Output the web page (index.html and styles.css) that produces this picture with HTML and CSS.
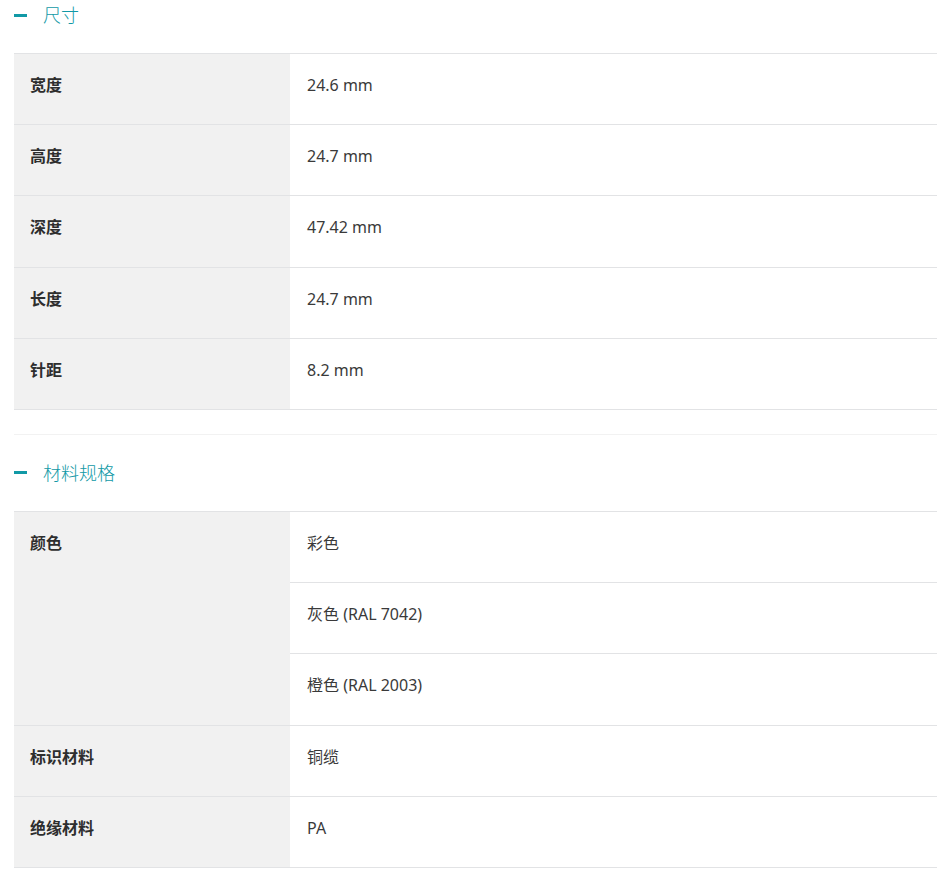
FILE: index.html
```html
<!DOCTYPE html>
<html lang="zh-CN">
<head>
<meta charset="utf-8">
<title>规格</title>
<link rel="stylesheet" href="styles.css">
</head>
<body>
<div class="page">
  <section class="section">
    <div class="section-head">
      <span class="toggle" aria-hidden="true"></span>
      <h2 class="section-title">尺寸</h2>
    </div>
    <div class="spec-table">
      <div class="row"><div class="label">宽度</div><div class="values"><div class="value">24.6 mm</div></div></div>
      <div class="row"><div class="label">高度</div><div class="values"><div class="value">24.7 mm</div></div></div>
      <div class="row"><div class="label">深度</div><div class="values"><div class="value">47.42 mm</div></div></div>
      <div class="row"><div class="label">长度</div><div class="values"><div class="value">24.7 mm</div></div></div>
      <div class="row"><div class="label">针距</div><div class="values"><div class="value">8.2 mm</div></div></div>
    </div>
  </section>
  <section class="section">
    <div class="section-head">
      <span class="toggle" aria-hidden="true"></span>
      <h2 class="section-title">材料规格</h2>
    </div>
    <div class="spec-table">
      <div class="row"><div class="label">颜色</div><div class="values"><div class="value">彩色</div><div class="value">灰色 (RAL 7042)</div><div class="value">橙色 (RAL 2003)</div></div></div>
      <div class="row"><div class="label">标识材料</div><div class="values"><div class="value">铜缆</div></div></div>
      <div class="row"><div class="label">绝缘材料</div><div class="values"><div class="value">PA</div></div></div>
    </div>
  </section>
</div>
</body>
</html>
```
FILE: styles.css
```css
html, body {
  margin: 0;
  padding: 0;
  background: #ffffff;
}

body {
  font-family: "Noto Sans", "Noto Sans CJK SC", sans-serif;
  font-size: 16px;
  color: #333333;
}

.page {
  padding: 0 11px 0 14px;
}

.section + .section {
  margin-top: 24px;
  border-top: 1px solid #f2f2f2;
}

.section-head {
  display: flex;
  align-items: center;
  gap: 16px;
  padding: 26px 0;
}

.section:first-child .section-head {
  padding-top: 3px;
}

.toggle {
  display: block;
  width: 13px;
  height: 3px;
  background: #1199a6;
}

.section-title {
  margin: 0;
  font-size: 18px;
  line-height: 24px;
  font-weight: 300;
  color: #1199a6;
}

.spec-table {
  border-top: 1px solid #e2e3e5;
}

.row {
  display: grid;
  grid-template-columns: 276px 1fr;
  border-bottom: 1px solid #e2e3e5;
}

.label {
  background: #f1f1f1;
  font-weight: 700;
  color: #2e2e2e;
  padding: 19px 16px 27.2px;
  line-height: 24px;
}

.values {
  display: flex;
  flex-direction: column;
}

.value {
  padding: 19px 17px 27.2px;
  line-height: 24px;
  color: #3a3a3a;
  font-size: 16px;
}

.value + .value {
  border-top: 1px solid #e2e3e5;
}
```
